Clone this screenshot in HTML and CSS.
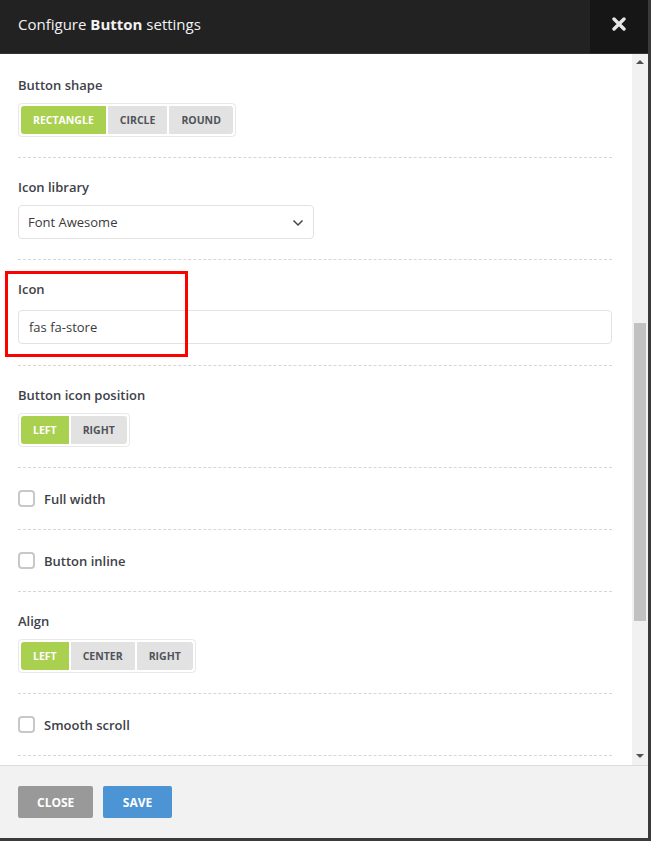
FILE: index.html
```html
<!DOCTYPE html>
<html>
<head>
<meta charset="utf-8">
<link rel="stylesheet" href="styles.css">
</head>
<body>
<div class="modal">
  <header class="modal-header">
    <h1 class="title">Configure <b>Button</b> settings</h1>
    <button class="close-x" type="button" aria-label="Close">
      <svg width="14" height="14" viewBox="0 0 14 14"><path d="M2 2 L12 12 M12 2 L2 12" stroke="#e6e6e6" stroke-width="3.4" stroke-linecap="round"/></svg>
    </button>
  </header>
  <div class="modal-body">
    <div class="content">
      <section class="field">
        <div class="label">Button shape</div>
        <div class="seg">
          <span class="seg-btn active">Rectangle</span>
          <span class="seg-btn">Circle</span>
          <span class="seg-btn">Round</span>
        </div>
      </section>
      <section class="field">
        <div class="label">Icon library</div>
        <div class="select">
          <span>Font Awesome</span>
          <svg class="chev" width="12" height="8" viewBox="0 0 12 8"><path d="M1.5 1.5 L6 6 L10.5 1.5" fill="none" stroke="#444" stroke-width="1.5"/></svg>
        </div>
      </section>
      <section class="field field-icon">
        <div class="label">Icon</div>
        <div class="input">fas fa-store</div>
        <div class="highlight"></div>
      </section>
      <section class="field">
        <div class="label">Button icon position</div>
        <div class="seg">
          <span class="seg-btn active">Left</span>
          <span class="seg-btn">Right</span>
        </div>
      </section>
      <section class="field">
        <label class="check"><span class="box"></span>Full width</label>
      </section>
      <section class="field">
        <label class="check"><span class="box"></span>Button inline</label>
      </section>
      <section class="field">
        <div class="label">Align</div>
        <div class="seg">
          <span class="seg-btn active">Left</span>
          <span class="seg-btn">Center</span>
          <span class="seg-btn">Right</span>
        </div>
      </section>
      <section class="field">
        <label class="check"><span class="box"></span>Smooth scroll</label>
      </section>
    </div>
    <div class="scrollbar">
      <span class="arrow up"></span>
      <div class="track"><div class="thumb"></div></div>
      <span class="arrow down"></span>
    </div>
  </div>
  <footer class="modal-footer">
    <button class="btn btn-close" type="button">Close</button>
    <button class="btn btn-save" type="button">Save</button>
  </footer>
</div>
</body>
</html>
```
FILE: styles.css
```css
html, body {
  margin: 0;
  padding: 0;
}
body {
  background: #3a3a3a;
  font-family: "Open Sans", "Liberation Sans", sans-serif;
  width: 651px;
  height: 841px;
  overflow: hidden;
}
.modal {
  width: 648px;
  height: 838px;
  display: flex;
  flex-direction: column;
  background: #fff;
  overflow: hidden;
}
.modal-header {
  height: 53px;
  flex: 0 0 53px;
  background: #222;
  border-bottom: 1px solid #3a3230;
  display: flex;
  align-items: stretch;
  justify-content: space-between;
}
.title {
  margin: 0;
  padding-left: 18px;
  font-size: 15px;
  font-weight: 400;
  color: #f2f2f2;
  line-height: 49px;
}
.title b {
  font-weight: 700;
}
.close-x {
  width: 58px;
  border: 0;
  padding: 0;
  background: #161616;
  display: flex;
  align-items: center;
  justify-content: center;
  padding-bottom: 5px;
}
.modal-body {
  flex: 1;
  display: flex;
  min-height: 0;
}
.content {
  flex: 1;
  padding: 2px 20px 0 18px;
  overflow: hidden;
}
.field {
  padding: 20px 0 20px;
  border-bottom: 1px dashed #d6d6d6;
  position: relative;
}
.label {
  font-size: 13px;
  font-weight: 600;
  color: #3d4148;
  line-height: 18px;
  margin-bottom: 9px;
}
.seg {
  display: inline-flex;
  gap: 2px;
  padding: 2px;
  border: 1px solid #e8e8e8;
  border-radius: 4px;
}
.seg-btn {
  height: 28px;
  line-height: 28px;
  padding: 0 12px;
  background: #e2e2e2;
  color: #50545a;
  font-size: 10.5px;
  font-weight: 700;
  text-transform: uppercase;
}
.seg-btn:first-child {
  border-radius: 3px 0 0 3px;
}
.seg-btn:last-child {
  border-radius: 0 3px 3px 0;
}
.seg-btn.active {
  background: #a9d04f;
  color: #fff;
}
.select {
  box-sizing: border-box;
  width: 296px;
  height: 34px;
  border: 1px solid #e2e2e2;
  border-radius: 4px;
  display: flex;
  align-items: center;
  justify-content: space-between;
  padding: 0 9px 0 9px;
  font-size: 13px;
  color: #3a3a3a;
}
.chev {
  margin-top: 1px;
}
.field-icon .label {
  margin-bottom: 12px;
}
.field-icon {
  padding-bottom: 21px;
}
.input {
  box-sizing: border-box;
  height: 34px;
  line-height: 32px;
  border: 1px solid #e2e2e2;
  border-radius: 4px;
  padding: 0 10px;
  font-size: 13px;
  color: #3a3a3a;
}
.highlight {
  position: absolute;
  left: -13px;
  top: 11px;
  width: 177px;
  height: 80px;
  border: 3px solid #f00;
}
.check {
  display: flex;
  align-items: center;
  gap: 9px;
  height: 21px;
  font-size: 13px;
  font-weight: 600;
  color: #3d4148;
}
.box {
  box-sizing: border-box;
  width: 17px;
  height: 17px;
  border: 2px solid #c8c8c8;
  border-radius: 4px;
  background: #fff;
}
.scrollbar {
  width: 16px;
  flex: 0 0 16px;
  background: #f1f1f1;
  display: flex;
  flex-direction: column;
  align-items: center;
}
.arrow {
  width: 0;
  height: 0;
  border-left: 4px solid transparent;
  border-right: 4px solid transparent;
  flex: 0 0 auto;
}
.arrow.up {
  border-bottom: 4px solid #505050;
  margin: 6px 0 0;
}
.arrow.down {
  border-top: 4px solid #505050;
  margin: 0 0 7px;
}
.track {
  flex: 1;
  width: 100%;
  position: relative;
}
.thumb {
  position: absolute;
  left: 2px;
  width: 12px;
  top: 259px;
  height: 298px;
  background: #c1c1c1;
}
.modal-footer {
  flex: 0 0 auto;
  background: #f2f2f2;
  border-top: 1px solid #dcdcdc;
  padding: 20px 18px;
  display: flex;
  gap: 10px;
}
.btn {
  height: 32px;
  border: 0;
  border-radius: 2px;
  color: #fff;
  font-family: "Open Sans", "Liberation Sans", sans-serif;
  font-size: 12px;
  font-weight: 700;
  text-transform: uppercase;
  padding: 0 19px;
}
.btn-close {
  width: 75px;
  background: #999;
}
.btn-save {
  width: 69px;
  background: #4d94d5;
}
```
